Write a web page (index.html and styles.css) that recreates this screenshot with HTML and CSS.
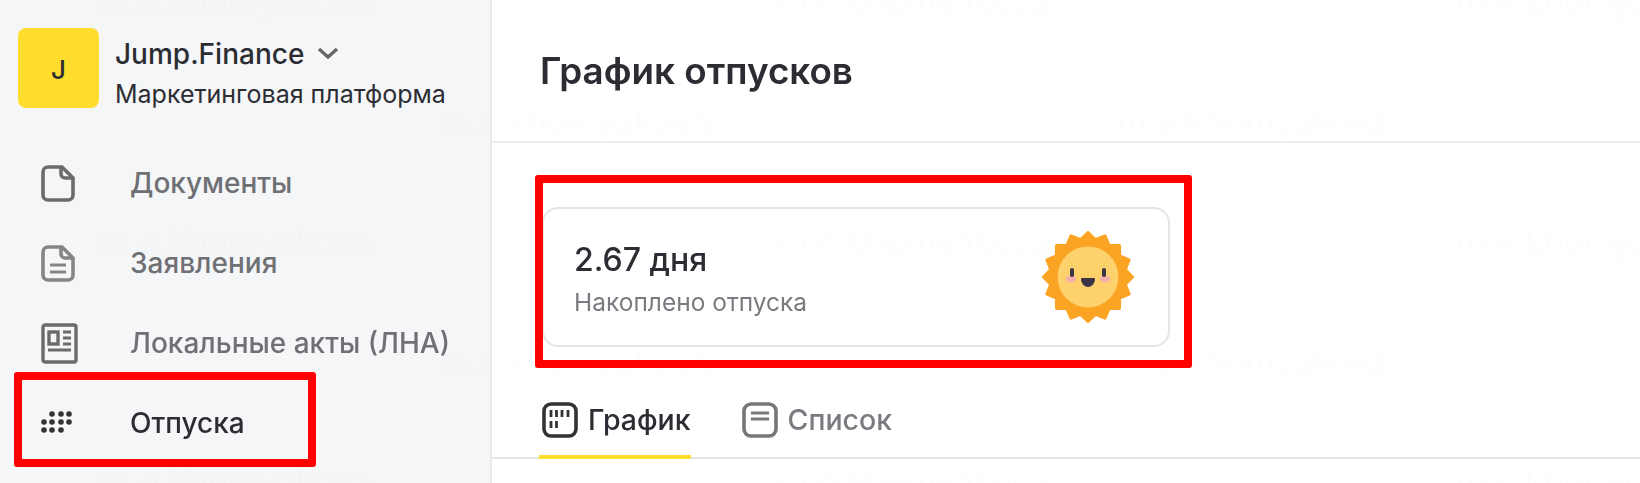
FILE: index.html
```html
<!DOCTYPE html>
<html lang="ru">
<head>
    <meta charset="UTF-8">
    <title>График отпусков</title>
    <link rel="stylesheet" href="styles.css">
</head>
<body>
    <div class="page">
        <aside class="sidebar">
            <div class="company">
                <div class="logo">J</div>
                <div class="company-info">
                    <div class="company-name">
                        Jump.Finance
                        <svg class="chevron" width="22" height="12" viewBox="0 0 22 12"><path d="M2 2l9 8 9-8" fill="none" stroke="#666" stroke-width="3.4"/></svg>
                    </div>
                    <div class="company-sub">Маркетинговая платформа</div>
                </div>
            </div>
            <ul class="nav">
                <li class="nav-item">
                    <span class="nav-icon">
                        <svg width="34" height="37" viewBox="0 0 34 37" fill="none" stroke="#6b6b6b" stroke-width="3.6"><path d="M7 2h14l11 11v17a5 5 0 0 1-5 5H7a5 5 0 0 1-5-5V7a5 5 0 0 1 5-5z"/><path d="M20 2v7a4 4 0 0 0 4 4h8"/></svg>
                    </span>
                    Документы
                </li>
                <li class="nav-item">
                    <span class="nav-icon">
                        <svg width="34" height="37" viewBox="0 0 34 37" fill="none" stroke="#858585" stroke-width="3.6"><path d="M7 2h14l11 11v17a5 5 0 0 1-5 5H7a5 5 0 0 1-5-5V7a5 5 0 0 1 5-5z"/><path d="M20 2v7a4 4 0 0 0 4 4h8"/><path d="M9 20h16M9 27h16" stroke-width="3"/></svg>
                    </span>
                    Заявления
                </li>
                <li class="nav-item">
                    <span class="nav-icon">
                        <svg width="37" height="41" viewBox="0 0 37 41" fill="none" stroke="#6b6b6b" stroke-width="3.4"><rect x="2" y="2" width="33" height="37" rx="2"/><rect x="8" y="9" width="9" height="12"/><path d="M22 9h8M22 15h8M22 21h8M7 27h23" stroke-width="3"/></svg>
                    </span>
                    Локальные акты (ЛНА)
                </li>
                <li class="nav-item nav-item-active mark">
                    <span class="nav-icon">
                        <svg width="32" height="26" viewBox="0 0 32 26" fill="#333"><circle cx="11" cy="4" r="2.8"/><circle cx="20" cy="4" r="2.8"/><circle cx="28" cy="4" r="2.8"/><circle cx="3" cy="12" r="2.8"/><circle cx="11" cy="12" r="2.8"/><circle cx="20" cy="12" r="2.8"/><circle cx="28" cy="12" r="2.8"/><circle cx="3" cy="20" r="2.8"/><circle cx="11" cy="20" r="2.8"/><circle cx="20" cy="20" r="2.8"/></svg>
                    </span>
                    Отпуска
                </li>
            </ul>
        </aside>
        <main class="main">
            <h1 class="title">График отпусков</h1>
            <div class="card mark">
                <div class="card-text">
                    <div class="card-value">2.67 дня</div>
                    <div class="card-label">Накоплено отпуска</div>
                </div>
                <svg class="sun" width="92" height="92" viewBox="-46 -46 92 92">
                    <polygon fill="#fba423" stroke="#fba423" stroke-width="3" stroke-linejoin="round" points="0,-44.5 7.400,-37.300 17,-41.100 21.100,-31.600 31.500,-31.500 31.600,-21.100 41.100,-17 37.300,-7.400 44.500,0 37.300,7.400 41.100,17 31.600,21.100 31.500,31.500 21.100,31.600 17,41.100 7.400,37.300 0,44.500 -7.400,37.300 -17,41.100 -21.100,31.600 -31.500,31.500 -31.600,21.100 -41.100,17 -37.300,7.400 -44.500,0 -37.300,-7.400 -41.100,-17 -31.600,-21.100 -31.500,-31.500 -21.100,-31.600 -17,-41.100 -7.400,-37.300"/>
                    <circle r="30.5" fill="#fdd16b"/>
                    <ellipse cx="-17" cy="2" rx="5" ry="3.6" fill="#f6aeb0"/>
                    <ellipse cx="17" cy="2" rx="5" ry="3.6" fill="#f6aeb0"/>
                    <rect x="-18" y="-9" width="4" height="9" rx="2" fill="#3b3346"/>
                    <rect x="14" y="-9" width="4" height="9" rx="2" fill="#3b3346"/>
                    <path d="M-6 1h12a1 1 0 0 1 1 1c0 4-3 8-7 8s-7-4-7-8a1 1 0 0 1 1-1z" fill="#3b3346"/>
                </svg>
            </div>
            <div class="tabs">
                <div class="tab tab-active">
                    <svg width="36" height="36" viewBox="0 0 36 36" fill="none" stroke="#333" stroke-width="3.6"><rect x="2" y="2" width="32" height="32" rx="7"/><path d="M9 8v7M14.500 8v7M20 8v7M26 8v7M9 19v7M14.500 19v7" stroke-width="2.8"/></svg>
                    График
                </div>
                <div class="tab">
                    <svg width="36" height="36" viewBox="0 0 36 36" fill="none" stroke="#777" stroke-width="3.6"><rect x="2" y="2" width="32" height="32" rx="7"/><path d="M9 11h18M9 17h18" stroke-width="3"/></svg>
                    Список
                </div>
            </div>
        </main>
        <div class="watermark">
            <div class="wm-row"><span>m.e.khomyakova</span><span>m.e.khomyakova</span><span>m.e.khomyakova</span></div>
            <div class="wm-row wm-shift"><span>m.e.khomyakova</span><span>m.e.khomyakova</span></div>
            <div class="wm-row"><span>m.e.khomyakova</span><span>m.e.khomyakova</span><span>m.e.khomyakova</span></div>
            <div class="wm-row wm-shift"><span>m.e.khomyakova</span><span>m.e.khomyakova</span></div>
            <div class="wm-row"><span>m.e.khomyakova</span><span>m.e.khomyakova</span><span>m.e.khomyakova</span></div>
        </div>
    </div>
</body>
</html>
```

FILE: styles.css
```css
* {
    margin: 0;
    padding: 0;
    box-sizing: border-box;
    list-style: none;
}
html,
body {
    height: 483px;
    overflow: hidden;
    background: #fff;
}
.page {
    position: relative;
    display: flex;
    height: 483px;
    overflow: hidden;
    font-family: "Inter", "Noto Sans", sans-serif;
    color: #2b2d33;
    filter: blur(0.7px);
}
.sidebar {
    width: 492px;
    flex-shrink: 0;
    background: #f5f6f8;
    border-right: 2px solid #e9eaed;
}
.company {
    display: flex;
    padding: 28px 0 0 18px;
}
.logo {
    width: 81px;
    height: 80px;
    padding-top: 3px;
    border-radius: 8px;
    background: #ffdd2d;
    display: flex;
    align-items: center;
    justify-content: center;
    font-size: 26px;
    font-weight: 500;
}
.company-info {
    margin-left: 16px;
}
.company-name {
    display: flex;
    align-items: center;
    height: 52px;
    font-size: 28px;
    font-weight: 500;
}
.chevron {
    margin-left: 13px;
    margin-top: -2px;
}
.company-sub {
    font-size: 25px;
    line-height: 28px;
    white-space: nowrap;
}
.nav {
    margin-top: 35px;
}
.nav-item {
    display: flex;
    align-items: center;
    height: 80px;
    padding-left: 41px;
    font-size: 28px;
    font-weight: 500;
    color: #6f7074;
}
.nav-icon {
    width: 89px;
    display: flex;
    align-items: center;
}
.nav-item-active {
    color: #2b2d33;
}
.mark {
    position: relative;
}
.mark::after {
    content: "";
    position: absolute;
    box-sizing: border-box;
    border: 8px solid #f00;
    border-radius: 3px;
}
.nav-item.mark::after {
    left: 14px;
    top: -11px;
    width: 302px;
    height: 95px;
}
.main {
    flex: 1;
    min-width: 0;
}
.title {
    height: 143px;
    padding: 45px 0 0 48px;
    border-bottom: 2px solid #eceef1;
    font-size: 36.800px;
    line-height: 52px;
    font-weight: 600;
}
.card {
    display: flex;
    align-items: center;
    justify-content: space-between;
    width: 628px;
    height: 140px;
    margin: 64px 0 0 50px;
    padding: 0 34px 0 30px;
    border: 2px solid #e4e5e8;
    border-radius: 16px;
}
.card.mark::after {
    left: -9px;
    top: -34px;
    width: 657px;
    height: 193px;
}
.card-text {
    padding-top: 4px;
}
.card-value {
    font-size: 32px;
    font-weight: 500;
    line-height: 38px;
}
.card-label {
    margin-top: 8px;
    font-size: 24.500px;
    line-height: 30px;
    color: #7a7b80;
}
.sun {
    display: block;
}
.tabs {
    display: flex;
    height: 112px;
    padding: 55px 0 0 47px;
    border-bottom: 2px solid #e4e5e8;
}
.tab {
    display: flex;
    align-items: flex-start;
    gap: 10px;
    height: 57px;
    margin-right: 48px;
    padding-left: 3px;
    font-size: 28.500px;
    line-height: 36px;
    font-weight: 500;
    color: #7a7b80;
}
.tab-active {
    color: #2b2d33;
    border-bottom: 4px solid #ffdd2d;
}
.watermark {
    position: absolute;
    left: 100px;
    top: -17px;
    pointer-events: none;
}
.wm-row {
    display: flex;
    height: 120px;
    font-size: 34px;
    line-height: 40px;
    color: rgba(0, 0, 0, 0.009);
}
.wm-row span {
    width: 678px;
    flex-shrink: 0;
}
.wm-shift {
    margin-left: 339px;
}
```
